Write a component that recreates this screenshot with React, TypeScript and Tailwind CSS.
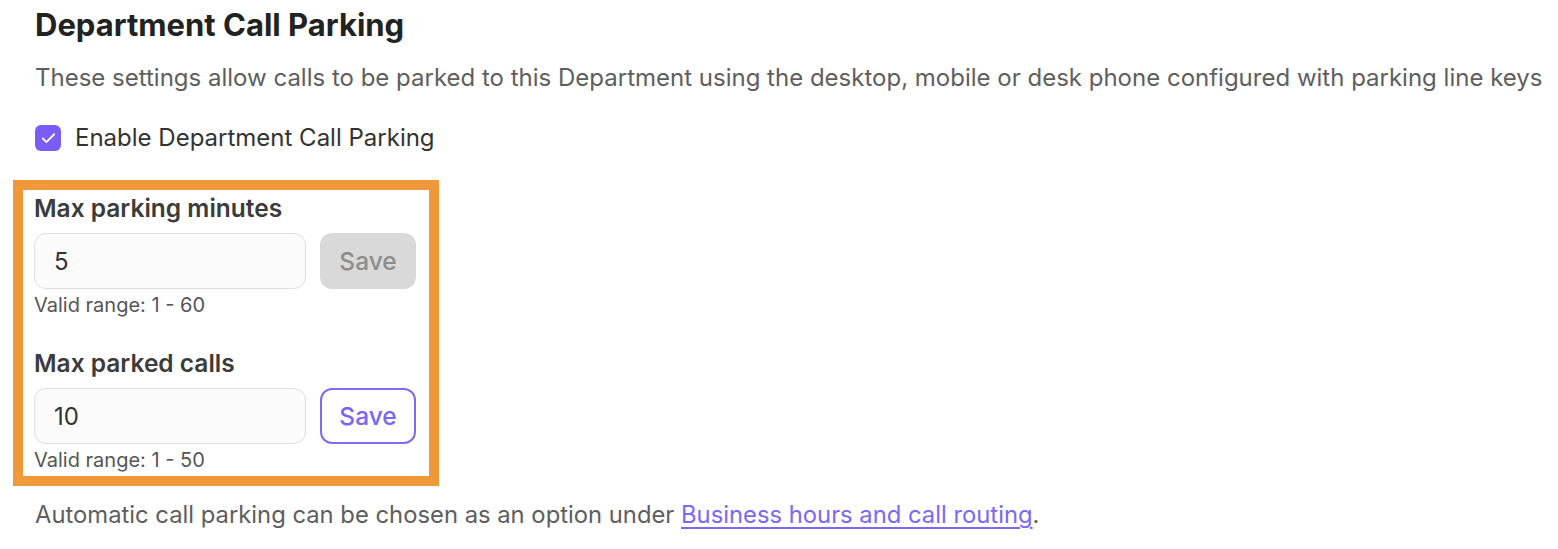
import { Check } from "lucide-react";

type Field = {
  label: string;
  value: string;
  hint: string;
  dirty: boolean;
};

const fields: Field[] = [
  { label: "Max parking minutes", value: "5", hint: "Valid range: 1 - 60", dirty: false },
  { label: "Max parked calls", value: "10", hint: "Valid range: 1 - 50", dirty: true },
];

function NumberField({ field }: { field: Field }) {
  return (
    <div className="flex flex-col">
      <label className="text-[24.5px] font-semibold leading-[30px] text-[#3b3b3b]">{field.label}</label>
      <div className="mt-[10px] flex items-center gap-[14px]">
        <input
          defaultValue={field.value}
          className="h-[56px] w-[272px] rounded-[12px] border border-[#dedede] bg-[#fbfbfb] px-[19px] text-[24px] text-[#333] outline-none"
        />
        <button
          type="button"
          className={
            field.dirty
              ? "h-[56px] w-[96px] rounded-[12px] border-2 border-[#7d6af5] bg-white text-[24.5px] font-medium text-[#7a66f3]"
              : "h-[56px] w-[96px] rounded-[12px] bg-[#d9d9d9] text-[24.5px] font-medium text-[#8d8d8d]"
          }
        >
          Save
        </button>
      </div>
      <div className="mt-[4px] text-[20px] leading-[24px] text-[#555]">{field.hint}</div>
    </div>
  );
}

export default function App() {
  return (
    <div className="min-h-[549px] bg-white pl-[35px] pt-[5px] font-['Inter',sans-serif] text-[#2b2b2b]">
      <h2 className="text-[31px] font-bold leading-[40px] text-[#222]">Department Call Parking</h2>
      <p className="mt-[17px] text-[24px] leading-[32px] text-[#5e5e5e]">
        These settings allow calls to be parked to this Department using the desktop, mobile or desk phone configured with parking line keys
      </p>
      <label className="mt-[28px] flex items-center gap-[14px]">
        <span className="grid h-[26px] w-[26px] place-items-center rounded-[6px] bg-[#7b5cf5]">
          <Check className="h-[17px] w-[17px] text-white" strokeWidth={2.5} />
        </span>
        <span className="text-[24px] leading-[32px] text-[#333]">Enable Department Call Parking</span>
      </label>

      <div className="-ml-[22px] mt-[26px] flex w-[426px] flex-col gap-[31px] border-[10px] border-[#f0993a] pb-[4px] pl-[11px] pt-[3px]">
        {fields.map((f) => (
          <NumberField key={f.label} field={f} />
        ))}
      </div>

      <p className="mt-[13px] text-[23.8px] leading-[32px] text-[#5e5e5e]">
        Automatic call parking can be chosen as an option under{" "}
        <a href="#" className="text-[#7b68f6] underline decoration-[1.5px] underline-offset-[4px]">
          Business hours and call routing
        </a>
        .
      </p>
    </div>
  );
}
